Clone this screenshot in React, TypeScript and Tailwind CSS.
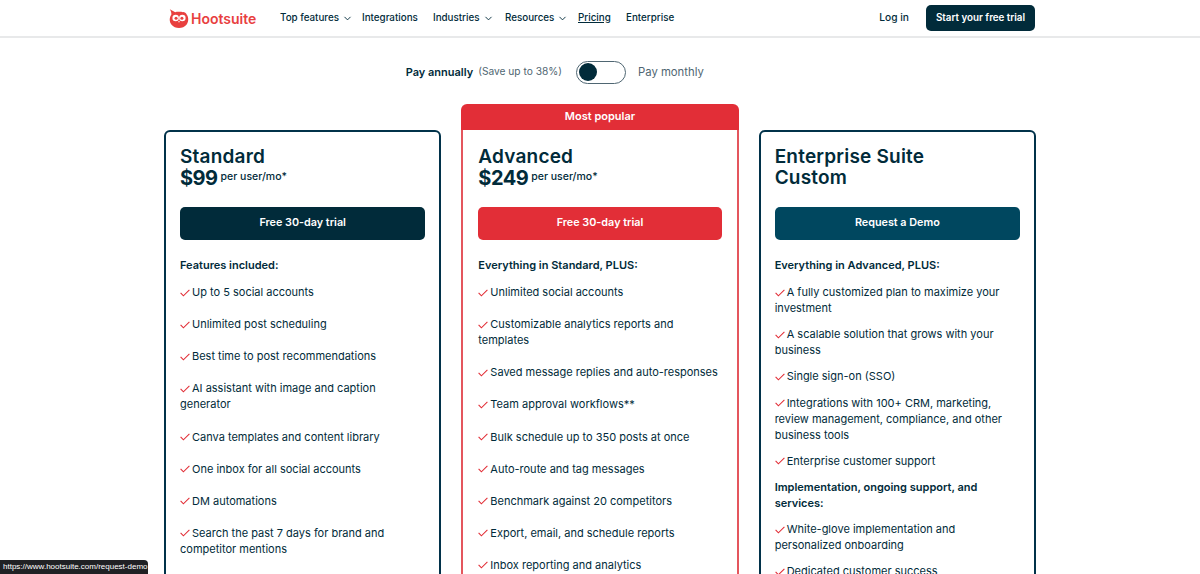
import { ChevronDown } from "lucide-react";

type Row = { text: string; heading?: boolean };

type Plan = {
    name: string;
    price?: string;
    cta: string;
    ctaClass: string;
    intro: string;
    rows: Row[];
    popular?: boolean;
    rowGap: string;
};

const navItems = [
    { label: "Top features", menu: true, width: "w-[82px]" },
    { label: "Integrations", width: "w-[71px]" },
    { label: "Industries", menu: true, width: "w-[72px]" },
    { label: "Resources", menu: true, width: "w-[73px]" },
    { label: "Pricing", underline: true, width: "w-[48px]" },
    { label: "Enterprise", width: "w-[60px]" },
];

const plans: Plan[] = [
    {
        name: "Standard",
        price: "$99",
        cta: "Free 30-day trial",
        ctaClass: "bg-[#012b3a]",
        intro: "Features included:",
        rowGap: "mb-4",
        rows: [
            { text: "Up to 5 social accounts" },
            { text: "Unlimited post scheduling" },
            { text: "Best time to post recommendations" },
            { text: "AI assistant with image and caption generator" },
            { text: "Canva templates and content library" },
            { text: "One inbox for all social accounts" },
            { text: "DM automations" },
            { text: "Search the past 7 days for brand and competitor mentions" },
        ],
    },
    {
        name: "Advanced",
        price: "$249",
        cta: "Free 30-day trial",
        ctaClass: "bg-[#e22e37]",
        intro: "Everything in Standard, PLUS:",
        popular: true,
        rowGap: "mb-4",
        rows: [
            { text: "Unlimited social accounts" },
            { text: "Customizable analytics reports and templates" },
            { text: "Saved message replies and auto-responses" },
            { text: "Team approval workflows**" },
            { text: "Bulk schedule up to 350 posts at once" },
            { text: "Auto-route and tag messages" },
            { text: "Benchmark against 20 competitors" },
            { text: "Export, email, and schedule reports" },
            { text: "Inbox reporting and analytics" },
        ],
    },
    {
        name: "Enterprise Suite Custom",
        cta: "Request a Demo",
        ctaClass: "bg-[#00475f]",
        intro: "Everything in Advanced, PLUS:",
        rowGap: "mb-[10px]",
        rows: [
            { text: "A fully customized plan to maximize your investment" },
            { text: "A scalable solution that grows with your business" },
            { text: "Single sign-on (SSO)" },
            { text: "Integrations with 100+ CRM, marketing, review management, compliance, and other business tools" },
            { text: "Enterprise customer support" },
            { text: "Implementation, ongoing support, and services:", heading: true },
            { text: "White-glove implementation and personalized onboarding" },
            { text: "Dedicated customer success" },
        ],
    },
];

function OwlLogo() {
    return (
        <svg width="20" height="19" viewBox="1.5 0.3 18 17.6" className="shrink-0">
            <path
                d="M2 0.5 L7 3.2 C8.2 2.8 12.8 2.8 14 3.2 C15.5 3 17 4 17.6 5.5 C19.5 8 19.6 12 17.6 14.6 C15.8 16.9 13.2 17.8 10.5 17.8 C7.8 17.8 5.2 16.9 3.4 14.6 C1.4 12 1.5 8 3.4 5.6 C3.6 4.6 3.2 2 2 0.5 Z"
                fill="#e8403f"
            />
            <circle cx="7.4" cy="8.6" r="3" fill="#fff" />
            <circle cx="13.6" cy="8.6" r="3" fill="#fff" />
            <circle cx="7.8" cy="8.8" r="1.4" fill="#e8403f" />
            <circle cx="13.2" cy="8.8" r="1.4" fill="#e8403f" />
            <path d="M9.6 11.6 L10.5 13 L11.4 11.6 Z" fill="#fff" />
        </svg>
    );
}

function Check() {
    return (
        <svg width="10" height="8" viewBox="0 0 10 8" className="mr-[2px] inline-block align-[-0.5px]">
            <path d="M0.6 3.8 L3.4 6.8 L9.4 0.8" fill="none" stroke="#e22e37" strokeWidth="1.1" />
        </svg>
    );
}

function PlanCard({ plan }: { plan: Plan }) {
    return (
        <div className={plan.popular ? "" : "pt-[26px]"}>
            {plan.popular && (
                <div className="flex h-[26px] items-center justify-center rounded-t-md bg-[#e22e37] pb-[2px] text-[11px] font-semibold text-white">
                    Most popular
                </div>
            )}
            <div
                className={
                    plan.popular
                        ? "h-[470px] border-2 border-t-0 border-[#e4565d] px-[15px] pt-[16px]"
                        : "h-[470px] rounded-t-md border-2 border-[#01324a] px-[14px] pt-[14px]"
                }
            >
                <h2 className="w-[200px] text-[19px] leading-[21px] font-semibold tracking-[0.2px] text-[#012b3a]">
                    {plan.name}
                </h2>
                {plan.price ? (
                    <p className="flex h-[21px] items-center text-[#012b3a]">
                        <span className="text-[20px] leading-none font-bold tracking-[-0.5px]">{plan.price}</span>
                        <span className="ml-[3px] text-[10.5px] leading-none font-medium">per user/mo*</span>
                    </p>
                ) : null}
                <a
                    className={`mt-[19px] flex h-[33px] items-center justify-center rounded-[5px] text-[10.8px] font-semibold text-white ${plan.ctaClass}`}
                >
                    {plan.cta}
                </a>
                <p className="mt-[17px] mb-[11px] text-[11px] leading-[16.1px] font-semibold text-[#012b3a]">
                    {plan.intro}
                </p>
                <ul className="text-[11px] leading-[16.1px] text-[#012b3a]">
                    {plan.rows.map((row) => (
                        <li key={row.text} className={`${plan.rowGap} ${row.heading ? "font-semibold" : ""}`}>
                            {!row.heading && <Check />}
                            {row.text}
                        </li>
                    ))}
                </ul>
            </div>
        </div>
    );
}

export default function App() {
    return (
        <div className="relative h-[574px] overflow-hidden bg-white font-['Inter',sans-serif]">
            <header className="flex h-[38px] items-center border-b-2 border-[#e8e9ea] pr-[165px] pl-[169px]">
                <div className="flex w-[111px] items-center gap-[2px]">
                    <OwlLogo />
                    <span className="text-[14px] font-semibold text-[#e8403f]">Hootsuite</span>
                </div>
                <nav className="flex items-center text-[#012b3a]">
                    {navItems.map((item) => (
                        <a
                            key={item.label}
                            className={`flex items-center text-[9.8px] font-medium ${item.width} ${item.underline ? "underline" : ""}`}
                        >
                            {item.label}
                            {item.menu && <ChevronDown size={11} className="ml-[3px]" />}
                        </a>
                    ))}
                </nav>
                <a className="mr-[17px] ml-auto text-[10.2px] font-medium text-[#012b3a]">Log in</a>
                <a className="flex h-[26px] w-[109px] items-center justify-center rounded-[5px] bg-[#012b3a] text-[9.8px] font-semibold text-white">
                    Start your free trial
                </a>
            </header>

            <div className="mt-[22px] grid h-[24px] grid-cols-[1fr_auto_1fr] items-center text-[#012b3a]">
                <div className="flex items-center justify-end">
                    <span className="text-[11px] font-semibold">Pay annually</span>
                    <span className="ml-[5px] text-[10.2px] text-[#4f6672]">(Save up to 38%)</span>
                </div>
                <span className="mr-[12px] ml-[14px] flex h-[23px] w-[50px] items-center rounded-full border border-[#4f6672] pl-[2px]">
                    <span className="h-[18px] w-[18px] rounded-full bg-[#012b3a]" />
                </span>
                <span className="text-[11.3px] text-[#4f6672]">Pay monthly</span>
            </div>

            <main className="mx-[164px] mt-[20px] grid grid-cols-3 items-start gap-[20px]">
                {plans.map((plan) => (
                    <PlanCard key={plan.name} plan={plan} />
                ))}
            </main>

            <div className="absolute bottom-0 left-0 flex h-[14px] w-[148px] items-center rounded-tr bg-[#202124] pl-[3px] font-['Liberation_Sans',sans-serif] text-[8px] whitespace-nowrap text-white">
                https://www.hootsuite.com/request-demo
            </div>
        </div>
    );
}
